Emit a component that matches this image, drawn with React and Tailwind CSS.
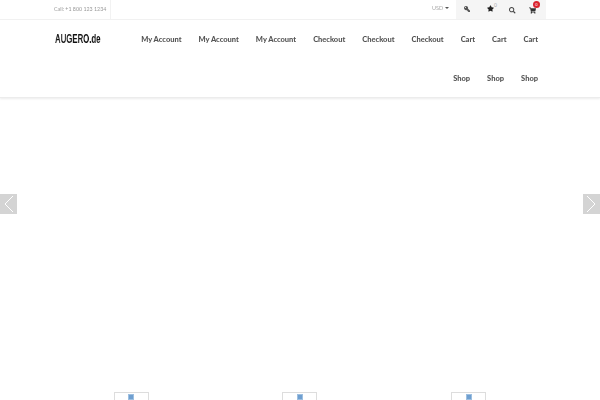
import React from "react";
import { FaKey, FaStar, FaSearch, FaShoppingCart } from "react-icons/fa";

const row1 = ["My Account", "My Account", "My Account", "Checkout", "Checkout", "Checkout", "Cart", "Cart", "Cart"];
const row2 = ["Shop", "Shop", "Shop"];

function NavItem({ label }) {
  return <a className="text-[7.5px] font-black text-[#555] whitespace-nowrap">{label}</a>;
}

function BrokenThumb() {
  return (
    <div className="flex justify-center">
      <div className="w-[35px] h-[8px] border border-b-0 border-[#ddd] flex justify-center pt-[1px]">
        <div className="w-[6px] h-[6px] bg-[#6f9fd0] border border-[#9dbfe0]" />
      </div>
    </div>
  );
}

function Chevron({ flip }) {
  return (
    <svg width="11" height="18" viewBox="0 0 11 18" fill="none" className={flip ? "-scale-x-100" : ""}>
      <path d="M10 1 L2 9 L10 17" stroke="#fff" strokeWidth="1" />
    </svg>
  );
}

export default function App() {
  return (
    <div className="w-[600px] h-[400px] overflow-hidden bg-white flex flex-col font-['Lato','Liberation_Sans',sans-serif]">
      <div className="h-[20px] border-b border-[#f2f2f2] pl-[48px] pr-[54px] flex justify-between">
        <div className="w-[63px] border-r border-[#f2f2f2] pl-[6px] flex items-center text-[5.3px] text-[#999] whitespace-nowrap will-change-transform">
          Call: +1 800 123 1234
        </div>
        <div className="flex items-center">
          <span className="text-[5.5px] text-[#aaa] mr-[7px] pb-[2px] flex items-center gap-[2px] will-change-transform">
            USD
            <span className="border-x-[2px] border-x-transparent border-t-[2px] border-t-[#555]" />
          </span>
          <div className="w-[90px] h-full bg-[#f5f5f5] flex items-center text-[#333] relative">
            <FaKey className="absolute left-[8px] top-[6px] text-[6px] -scale-x-100 text-[#555]" />
            <FaStar className="absolute left-[31px] top-[5px] text-[7px] text-[#222]" />
            <span className="absolute left-[38px] top-[2px] text-[5px] text-[#aaa]">0</span>
            <FaSearch className="absolute left-[53px] top-[7px] text-[6.5px] text-[#444]" />
            <FaShoppingCart className="absolute left-[73px] top-[7px] text-[7px] text-[#333]" />
            <span className="absolute left-[77px] top-[1px] w-[7px] h-[7px] rounded-full bg-[#d9232d] text-white text-[4px] leading-[7px] text-center">0</span>
          </div>
        </div>
      </div>

      <div className="h-[78px] border-b border-[#ececec] shadow-[0_1px_2px_rgba(0,0,0,0.08)] pl-[55px] pr-[62px] flex">
        <div className="w-[60px] shrink-0 pt-[12px] text-[12px] leading-[14px] font-bold text-[#111] origin-left scale-x-[0.65] whitespace-nowrap will-change-transform font-['Liberation_Sans',sans-serif]">
          AUGERO.de
        </div>
        <div className="flex-1 flex flex-col items-end will-change-transform">
          <div className="h-[39px] pt-[14px] flex gap-[17px] leading-[11px]">
            {row1.map((label, i) => (
              <NavItem key={i} label={label} />
            ))}
          </div>
          <div className="h-[39px] pt-[14px] flex gap-[17px] leading-[11px]">
            {row2.map((label, i) => (
              <NavItem key={i} label={label} />
            ))}
          </div>
        </div>
      </div>

      <div className="flex-1 relative flex flex-col justify-end">
        <div className="absolute left-0 top-[96px] w-[17px] h-[20px] bg-[#d4d4d4] flex items-center justify-center">
          <Chevron />
        </div>
        <div className="absolute right-0 top-[96px] w-[17px] h-[20px] bg-[#d4d4d4] flex items-center justify-center">
          <Chevron flip />
        </div>
        <div className="w-[506px] mx-auto grid grid-cols-3">
          <BrokenThumb />
          <BrokenThumb />
          <BrokenThumb />
        </div>
      </div>
    </div>
  );
}
